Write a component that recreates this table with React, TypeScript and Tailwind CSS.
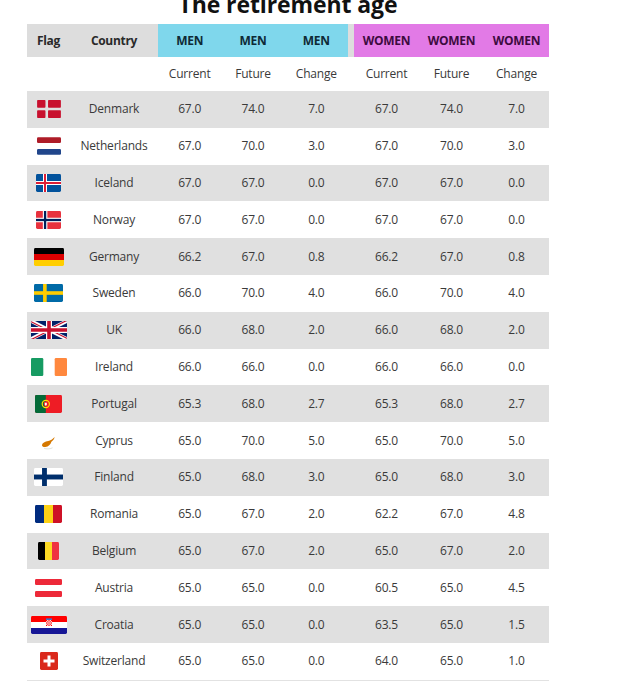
import React from "react";

type Row = [string, string, string, string, string, string, string, string];

const rows: Row[] = [
  ["Denmark", "dk", "67.0", "74.0", "7.0", "67.0", "74.0", "7.0"],
  ["Netherlands", "nl", "67.0", "70.0", "3.0", "67.0", "70.0", "3.0"],
  ["Iceland", "is", "67.0", "67.0", "0.0", "67.0", "67.0", "0.0"],
  ["Norway", "no", "67.0", "67.0", "0.0", "67.0", "67.0", "0.0"],
  ["Germany", "de", "66.2", "67.0", "0.8", "66.2", "67.0", "0.8"],
  ["Sweden", "se", "66.0", "70.0", "4.0", "66.0", "70.0", "4.0"],
  ["UK", "gb", "66.0", "68.0", "2.0", "66.0", "68.0", "2.0"],
  ["Ireland", "ie", "66.0", "66.0", "0.0", "66.0", "66.0", "0.0"],
  ["Portugal", "pt", "65.3", "68.0", "2.7", "65.3", "68.0", "2.7"],
  ["Cyprus", "cy", "65.0", "70.0", "5.0", "65.0", "70.0", "5.0"],
  ["Finland", "fi", "65.0", "68.0", "3.0", "65.0", "68.0", "3.0"],
  ["Romania", "ro", "65.0", "67.0", "2.0", "62.2", "67.0", "4.8"],
  ["Belgium", "be", "65.0", "67.0", "2.0", "65.0", "67.0", "2.0"],
  ["Austria", "at", "65.0", "65.0", "0.0", "60.5", "65.0", "4.5"],
  ["Croatia", "hr", "65.0", "65.0", "0.0", "63.5", "65.0", "1.5"],
  ["Switzerland", "ch", "65.0", "65.0", "0.0", "64.0", "65.0", "1.0"],
];

function Clipped({ w, vw, vh, id, children }: { w: number; vw: number; vh: number; id: string; children: React.ReactNode }) {
  return (
    <svg width={w} height={18} viewBox={`0 0 ${vw} ${vh}`} preserveAspectRatio="none">
      <defs>
        <clipPath id={id}>
          <rect x="0" y="0" width={vw} height={vh} rx={vh * 0.08} />
        </clipPath>
      </defs>
      <g clipPath={`url(#${id})`}>{children}</g>
    </svg>
  );
}

function Flag({ c }: { c: string }) {
  switch (c) {
    case "dk":
      return (
        <svg width={24} height={18} viewBox="0 0 37 28">
          <rect x="0" y="0" width="13" height="12" rx="1.2" fill="#c8102e" />
          <rect x="17" y="0" width="20" height="12" rx="1.2" fill="#c8102e" />
          <rect x="0" y="16" width="13" height="12" rx="1.2" fill="#c8102e" />
          <rect x="17" y="16" width="20" height="12" rx="1.2" fill="#c8102e" />
        </svg>
      );
    case "nl":
      return (
        <svg width={24} height={18} viewBox="0 0 24 18">
          <rect x="0" y="0.3" width="24" height="5.7" rx="1.2" fill="#ae1c28" />
          <rect x="0" y="12" width="24" height="5.7" rx="1.2" fill="#21468b" />
        </svg>
      );
    case "is":
      return (
        <Clipped w={25} vw={25} vh={18} id="f-is">
          <rect width="25" height="18" fill="#02529c" />
          <rect x="7" y="0" width="4" height="18" fill="#fff" />
          <rect x="0" y="7" width="25" height="4" fill="#fff" />
          <rect x="8" y="0" width="2" height="18" fill="#dc1e35" />
          <rect x="0" y="8" width="25" height="2" fill="#dc1e35" />
        </Clipped>
      );
    case "no":
      return (
        <Clipped w={25} vw={22} vh={16} id="f-no">
          <rect width="22" height="16" fill="#e8323e" />
          <rect x="6" y="0" width="4" height="16" fill="#fff" />
          <rect x="0" y="6" width="22" height="4" fill="#fff" />
          <rect x="7" y="0" width="2" height="16" fill="#00205b" />
          <rect x="0" y="7" width="22" height="2" fill="#00205b" />
        </Clipped>
      );
    case "de":
      return (
        <Clipped w={30} vw={5} vh={3} id="f-de">
          <rect width="5" height="1" fill="#000" />
          <rect y="1" width="5" height="1" fill="#dd0000" />
          <rect y="2" width="5" height="1" fill="#ffce00" />
        </Clipped>
      );
    case "se":
      return (
        <Clipped w={29} vw={16} vh={10} id="f-se">
          <rect width="16" height="10" fill="#006aa7" />
          <rect x="5" y="0" width="2" height="10" fill="#fecc00" />
          <rect x="0" y="4" width="16" height="2" fill="#fecc00" />
        </Clipped>
      );
    case "gb":
      return (
        <svg width={36} height={18} viewBox="0 0 60 30">
          <defs>
            <clipPath id="gb-s">
              <rect width="60" height="30" rx="2" />
            </clipPath>
            <clipPath id="gb-t">
              <path d="M30,15 h30 v15 z v15 h-30 z h-30 v-15 z v-15 h30 z" />
            </clipPath>
          </defs>
          <g clipPath="url(#gb-s)">
            <rect width="60" height="30" fill="#012169" />
            <path d="M0,0 L60,30 M60,0 L0,30" stroke="#fff" strokeWidth="6" />
            <path d="M0,0 L60,30 M60,0 L0,30" clipPath="url(#gb-t)" stroke="#C8102E" strokeWidth="4" />
            <path d="M30,0 v30 M0,15 h60" stroke="#fff" strokeWidth="10" />
            <path d="M30,0 v30 M0,15 h60" stroke="#C8102E" strokeWidth="6" />
          </g>
        </svg>
      );
    case "ie":
      return (
        <svg width={36} height={18} viewBox="0 0 36 18">
          <rect x="0" y="0" width="12.3" height="18" rx="1.3" fill="#169b62" />
          <rect x="23.7" y="0" width="12.3" height="18" rx="1.3" fill="#ff883e" />
        </svg>
      );
    case "pt":
      return (
        <Clipped w={27} vw={27} vh={18} id="f-pt">
          <rect width="27" height="18" fill="#ee1c25" />
          <rect width="10.8" height="18" fill="#046a38" />
          <circle cx="10.8" cy="9" r="3.6" fill="none" stroke="#ffe000" strokeWidth="1.2" />
          <path d="M8.9,6.8 h3.8 v2.8 c0,1.4 -0.9,2.1 -1.9,2.1 c-1,0 -1.9,-0.7 -1.9,-2.1 z" fill="#ee1c25" />
          <path d="M9.8,7.7 h2 v1.9 c0,0.7 -0.4,1.1 -1,1.1 c-0.6,0 -1,-0.4 -1,-1.1 z" fill="#fff" />
        </Clipped>
      );
    case "cy":
      return (
        <svg width={27} height={18} viewBox="0 0 27 18">
          <path d="M7,13 C7.3,10.8 10,9.6 13.2,9 C15.5,8.6 17.5,7.4 19.6,5 C19.3,7 18,8.6 16.4,9.8 C15.6,12.6 13.4,14.8 10.4,15 C8.4,15.2 6.8,14.4 7,13 Z" fill="#d57800" />
          <path d="M9,16.2 C11,17.2 15,17.2 17.6,15.8" fill="none" stroke="#4e5b31" strokeWidth="0.5" opacity="0.35" />
        </svg>
      );
    case "fi":
      return (
        <Clipped w={29} vw={18} vh={11} id="f-fi">
          <rect width="18" height="11" fill="#fff" />
          <rect x="5" y="0" width="3" height="11" fill="#002f6c" />
          <rect x="0" y="4" width="18" height="3" fill="#002f6c" />
        </Clipped>
      );
    case "ro":
      return (
        <Clipped w={27} vw={3} vh={2} id="f-ro">
          <rect width="1" height="2" fill="#002b7f" />
          <rect x="1" width="1" height="2" fill="#fcd116" />
          <rect x="2" width="1" height="2" fill="#ce1126" />
        </Clipped>
      );
    case "be":
      return (
        <Clipped w={21} vw={3} vh={2.6} id="f-be">
          <rect width="1" height="2.6" fill="#000" />
          <rect x="1" width="1" height="2.6" fill="#fdda24" />
          <rect x="2" width="1" height="2.6" fill="#ef3340" />
        </Clipped>
      );
    case "at":
      return (
        <svg width={27} height={18} viewBox="0 0 27 18">
          <rect x="0" y="0" width="27" height="6" rx="1.2" fill="#ed2939" />
          <rect x="0" y="12" width="27" height="6" rx="1.2" fill="#ed2939" />
        </svg>
      );
    case "hr": {
      const sq: React.ReactNode[] = [];
      for (let r = 0; r < 5; r++) {
        for (let k = 0; k < 5; k++) {
          if ((r + k) % 2 === 0) {
            sq.push(<rect key={`${r}-${k}`} x={15 + k * 1.2} y={4 + r * 1.2} width="1.2" height="1.2" fill="#ff0000" />);
          }
        }
      }
      return (
        <Clipped w={36} vw={36} vh={18} id="f-hr">
          <rect width="36" height="6" fill="#ff0000" />
          <rect y="6" width="36" height="6" fill="#fff" />
          <rect y="12" width="36" height="6" fill="#171796" />
          <rect x="15" y="2.4" width="6" height="1.6" fill="#3b73c7" />
          <path d="M15,4 h6 v5 c0,1.8 -1.4,3 -3,3 c-1.6,0 -3,-1.2 -3,-3 z" fill="#fff" />
          {sq}
        </Clipped>
      );
    }
    case "ch":
      return (
        <Clipped w={18} vw={18} vh={18} id="f-ch">
          <rect width="18" height="18" fill="#da291c" />
          <rect x="7.5" y="3.5" width="3" height="11" fill="#fff" />
          <rect x="3.5" y="7.5" width="11" height="3" fill="#fff" />
        </Clipped>
      );
    default:
      return null;
  }
}

const gridCols =
  "grid grid-cols-[43px_88px_63.33px_63.33px_63.34px_6px_65px_65px_65px]";

export default function App() {
  return (
    <div className="min-h-screen bg-white font-['Open_Sans','Liberation_Sans',sans-serif]">
      <div className="ml-[27px] w-[522px]">
        <div className="flex h-[24px] flex-col">
          <div className="-mt-[7px] text-center text-[23px] leading-[23px] font-bold text-[#111] tracking-[-0.1px]">
            The retirement age
          </div>
        </div>

        <div className={`${gridCols} h-[33px] bg-[#dddddd] text-[12px] font-bold tracking-[-0.3px]`}>
          <div className="flex items-center justify-center text-[#2a2a2a]">Flag</div>
          <div className="flex items-center justify-center text-[#2a2a2a]">Country</div>
          <div className="flex items-center justify-center bg-[#7fd7ec] text-[#0e2a36]">MEN</div>
          <div className="flex items-center justify-center bg-[#7fd7ec] text-[#0e2a36]">MEN</div>
          <div className="flex items-center justify-center bg-[#7fd7ec] text-[#0e2a36]">MEN</div>
          <div />
          <div className="flex items-center justify-center bg-[#e27ae6] text-[#3d0b40]">WOMEN</div>
          <div className="flex items-center justify-center bg-[#e27ae6] text-[#3d0b40]">WOMEN</div>
          <div className="flex items-center justify-center bg-[#e27ae6] text-[#3d0b40]">WOMEN</div>
        </div>

        <div className={`${gridCols} h-[34px] bg-white text-[12px] tracking-[-0.2px] text-[#3a3a3a]`}>
          <div />
          <div />
          <div className="flex items-center justify-center">Current</div>
          <div className="flex items-center justify-center">Future</div>
          <div className="flex items-center justify-center">Change</div>
          <div />
          <div className="flex items-center justify-center">Current</div>
          <div className="flex items-center justify-center">Future</div>
          <div className="flex items-center justify-center">Change</div>
        </div>

        <div className="border-b border-[#e2e2e2]">
          {rows.map((r, i) => (
            <div
              key={r[0]}
              className={`${gridCols} h-[36.8px] text-[12px] tracking-[-0.2px] text-[#3a3a3a] ${
                i % 2 === 0 ? "bg-[#e0e0e0]" : "bg-white"
              }`}
            >
              <div className="flex items-center justify-center">
                <Flag c={r[1]} />
              </div>
              <div className="flex items-center justify-center">{r[0]}</div>
              <div className="flex items-center justify-center">{r[2]}</div>
              <div className="flex items-center justify-center">{r[3]}</div>
              <div className="flex items-center justify-center">{r[4]}</div>
              <div />
              <div className="flex items-center justify-center">{r[5]}</div>
              <div className="flex items-center justify-center">{r[6]}</div>
              <div className="flex items-center justify-center">{r[7]}</div>
            </div>
          ))}
        </div>
      </div>
    </div>
  );
}
